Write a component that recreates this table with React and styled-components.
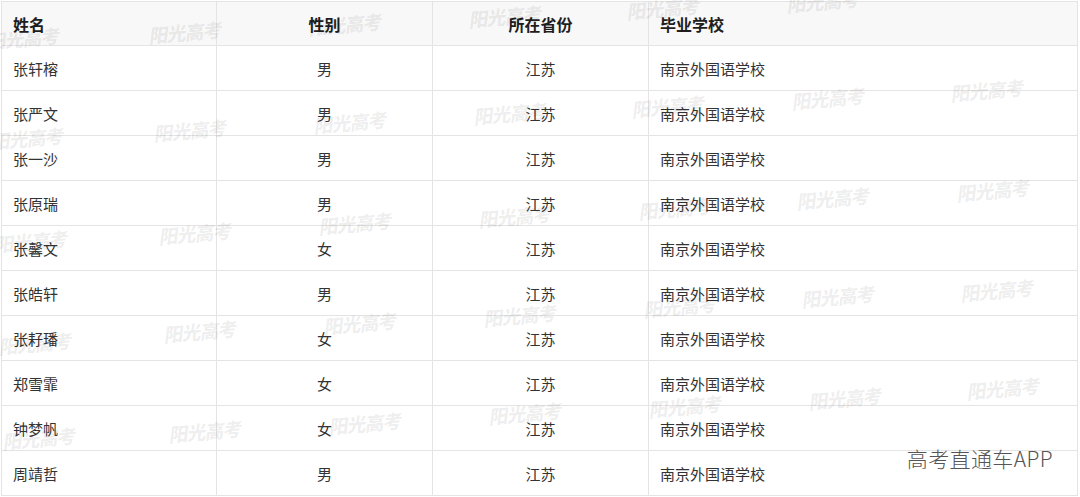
import React from "react";
import styled, { createGlobalStyle } from "styled-components";

const GlobalStyle = createGlobalStyle`
  html, body { margin: 0; padding: 0; background: #fff; }
  body { font-family: "Noto Sans CJK SC", "Noto Sans", sans-serif; }
  * { box-sizing: border-box; }
`;

const Page = styled.div`
  position: relative;
  width: 1080px;
  height: 497px;
  padding: 1px 0 0 1px;
  overflow: hidden;
  background: #fff;
`;

const Table = styled.div`
  display: grid;
  grid-template-columns: 215px 216px 216px 429px;
  border-top: 1px solid #e4e4e4;
  border-left: 1px solid #e4e4e4;
  width: 1077px;
`;

const Cell = styled.div`
  display: flex;
  align-items: center;
  justify-content: ${(p) => (p.$center ? "center" : "flex-start")};
  padding: ${(p) => (p.$center ? "0" : "0 0 0 11px")};
  height: ${(p) => (p.$head ? "44px" : "45px")};
  border-right: 1px solid #e4e4e4;
  border-bottom: 1px solid #e4e4e4;
  background: ${(p) => (p.$head ? "#f8f8f8" : "transparent")};
  color: ${(p) => (p.$head ? "#1e1e1e" : "#333")};
  font-size: ${(p) => (p.$head ? "16px" : "15px")};
  font-weight: ${(p) => (p.$head ? 700 : 400)};
  line-height: 1;
`;

const Watermark = styled.span`
  position: absolute;
  font-family: "Noto Sans CJK SC", sans-serif;
  font-weight: 900;
  font-size: 19px;
  letter-spacing: -1px;
  color: rgba(0, 0, 0, 0.07);
  transform: rotate(-5deg) skewX(-12deg);
  white-space: nowrap;
  pointer-events: none;
`;

const Brand = styled.span`
  position: absolute;
  right: 27px;
  top: 443px;
  font-family: "Noto Sans CJK SC", sans-serif;
  font-weight: 300;
  font-size: 21px;
  color: #555;
  letter-spacing: 0.4px;
  pointer-events: none;
`;

const rows = [
  ["张轩榕", "男"],
  ["张严文", "男"],
  ["张一沙", "男"],
  ["张原瑞", "男"],
  ["张馨文", "女"],
  ["张皓轩", "男"],
  ["张耔璠", "女"],
  ["郑雪霏", "女"],
  ["钟梦帆", "女"],
  ["周靖哲", "男"],
];

const marks = [
  [-12, 24], [150, 18], [310, 10], [470, 2], [628, -6], [788, -13],
  [-8, 124], [155, 116], [315, 108], [475, 99], [633, 92], [793, 84], [952, 76],
  [-4, 227], [160, 219], [320, 209], [480, 202], [640, 194], [798, 184], [958, 176],
  [0, 329], [165, 317], [325, 309], [485, 301], [645, 292], [803, 282], [962, 276],
  [4, 424], [170, 417], [330, 409], [490, 399], [650, 392], [810, 384], [968, 374],
];

export default function App() {
  return (
    <>
      <GlobalStyle />
      <Page>
        <Table>
          <Cell $head>姓名</Cell>
          <Cell $head $center>性别</Cell>
          <Cell $head $center>所在省份</Cell>
          <Cell $head>毕业学校</Cell>
          {rows.map(([name, sex]) => (
            <React.Fragment key={name}>
              <Cell>{name}</Cell>
              <Cell $center>{sex}</Cell>
              <Cell $center>江苏</Cell>
              <Cell>南京外国语学校</Cell>
            </React.Fragment>
          ))}
        </Table>
        {marks.map(([x, y], i) => (
          <Watermark key={i} style={{ left: x, top: y }}>
            阳光高考
          </Watermark>
        ))}
        <Brand>高考直通车APP</Brand>
      </Page>
    </>
  );
}
